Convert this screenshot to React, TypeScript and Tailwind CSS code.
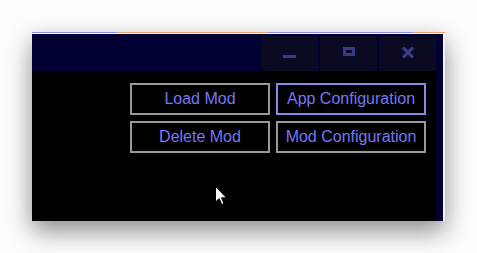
import React from "react";

function CtrlButton({ children }: { children: React.ReactNode }) {
  return (
    <div className="w-[57px] h-full bg-[#0a0a22] flex items-center justify-center">
      {children}
    </div>
  );
}

function ModButton({ label, active }: { label: string; active?: boolean }) {
  return (
    <button
      type="button"
      className={
        active
          ? "h-[32px] border-2 border-[#8a8ae6] bg-black text-[#7676f6] text-[16px] leading-none"
          : "h-[32px] border-2 border-[#9a9a9a] bg-black text-[#7676f6] text-[16px] leading-none"
      }
    >
      {label}
    </button>
  );
}

export default function App() {
  return (
    <div
      className="relative w-[477px] h-[253px] bg-[#fdfdfd] pt-[32px] pl-[32px] overflow-hidden"
      style={{ fontFamily: '"Liberation Sans", Arial, sans-serif' }}
    >
      <div className="w-[413px] h-[189px] flex flex-col shadow-[0_10px_24px_rgba(0,0,0,0.45)]">
        {/* top accent line */}
        <div className="h-px flex">
          <div className="w-[85px] bg-[#8c8cff]" />
          <div className="w-[150px] bg-[#f0a070]" />
          <div className="w-[146px] bg-[#8c8cff]" />
          <div className="flex-1 bg-[#f0a070]" />
        </div>
        <div className="flex flex-1 min-h-0">
          <div className="flex-1 flex flex-col">
            <div className="h-px bg-white" />
            {/* title bar */}
            <div className="h-[37px] bg-[#000033] flex justify-end items-end pr-[7px]">
              <div className="h-[35px] flex gap-[2px]">
                <CtrlButton>
                  <div className="w-[13px] h-[3px] bg-[#3a3a8c] mt-[5px]" />
                </CtrlButton>
                <CtrlButton>
                  <div className="w-[12px] h-[9px] border-[3px] border-[#3a3a8c] mb-[4px]" />
                </CtrlButton>
                <CtrlButton>
                  <svg width="12" height="11" viewBox="0 0 12 11" className="mb-[3px]">
                    <path d="M1 0.5 L11 10.5 M11 0.5 L1 10.5" stroke="#3a3a8c" strokeWidth="3.2" />
                  </svg>
                </CtrlButton>
              </div>
            </div>
            {/* content */}
            <div className="flex-1 flex">
              <div className="flex-1 bg-black flex justify-end pt-[12px] pr-[10px]">
                <div className="grid grid-cols-[140px_150px] gap-[6px] h-fit">
                  <ModButton label="Load Mod" />
                  <ModButton label="App Configuration" active />
                  <ModButton label="Delete Mod" />
                  <ModButton label="Mod Configuration" />
                </div>
              </div>
              <div className="w-[7px] bg-[#000033]" />
            </div>
          </div>
          <div className="w-[2px] bg-[#f4f4f4]" />
        </div>
      </div>
      {/* mouse cursor */}
      <svg
        width="14"
        height="22"
        viewBox="0 0 14 22"
        className="absolute left-[215px] top-[186px]"
      >
        <path
          d="M0.5 0.5 L0.5 16 L4.2 12.6 L6.8 18.6 L9 17.6 L6.5 11.8 L11.5 11.8 Z"
          fill="#ffffff"
          stroke="#000000"
          strokeWidth="1"
        />
      </svg>
    </div>
  );
}
